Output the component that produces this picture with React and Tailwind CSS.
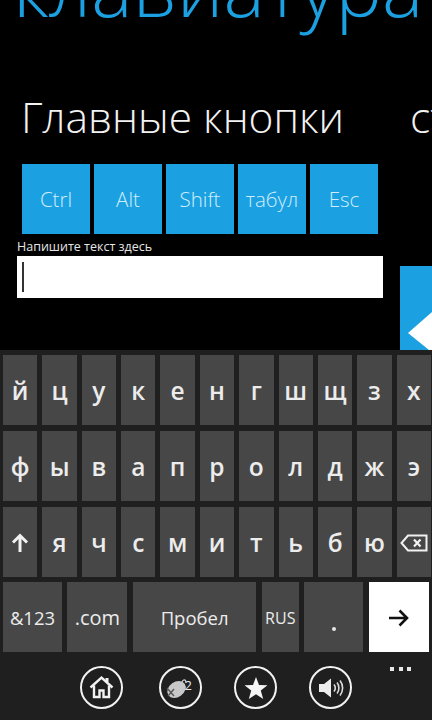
import React from "react";

const row1 = ["й", "ц", "у", "к", "е", "н", "г", "ш", "щ", "з", "х"];
const row2 = ["ф", "ы", "в", "а", "п", "р", "о", "л", "д", "ж", "э"];
const row3 = ["я", "ч", "с", "м", "и", "т", "ь", "б", "ю"];
const tiles = ["Ctrl", "Alt", "Shift", "табул", "Esc"];

function Key({ children, className = "text-[24.5px] font-semibold" }) {
  return (
    <div className={"bg-[#474747] h-[70px] flex items-center justify-center text-[#ececec] pt-[2px] " + className}>
      {children}
    </div>
  );
}

function Circle({ children }) {
  return (
    <div className="w-[43px] h-[43px] rounded-full border-[2px] border-[#f2f2f2] flex items-center justify-center">
      {children}
    </div>
  );
}

export default function App() {
  return (
    <div className="w-[432px] h-[720px] overflow-hidden bg-black flex flex-col font-['Open_Sans',sans-serif]">
      <div className="h-[350px] shrink-0 overflow-hidden">
        <h1 className="ml-[13px] mt-[-61px] h-[97px] text-[#1ba1e2] text-[78px] leading-[97px] font-light whitespace-nowrap font-['Open_Sans',sans-serif]">
          клавиатура
        </h1>
        <div className="mt-[53px] flex whitespace-nowrap text-[#f2f2f2] text-[42.5px] leading-[56px] font-light">
          <span className="ml-[21px] w-[389px] shrink-0">Главные кнопки</span>
          <span>ст</span>
        </div>
        <div className="mt-[19px] ml-[22px] flex gap-[4px]">
          {tiles.map((t) => (
            <div key={t} className="w-[68px] h-[70px] bg-[#1ba1e2] flex items-center justify-center text-[#d2edfa] text-[20.5px] font-light">
              {t}
            </div>
          ))}
        </div>
        <div className="flex">
          <div className="ml-[17px] w-[366px] shrink-0">
            <div className="text-[#e6e6e6] text-[12.5px] leading-[22px] h-[22px] pt-[2px]">Напишите текст здесь</div>
            <div className="h-[42px] bg-white flex items-center pl-[5px]">
              <div className="w-[2px] h-[30px] bg-[#333]" />
            </div>
          </div>
          <div className="ml-[17px] mt-[32px] w-[32px] h-[84px] bg-[#1ba1e2]">
            <svg width="32" height="84" viewBox="0 0 32 84">
              <path d="M8 67 L32 46 V84 H29 Z" fill="#fff" />
            </svg>
          </div>
        </div>
      </div>

      <div className="flex-1 bg-[#1f1f1f] pt-[5px] pl-[3px] pr-[1px]">
        <div className="grid grid-cols-11 gap-x-[5px] gap-y-[6px]">
          {row1.map((k) => <Key key={k}>{k}</Key>)}
          {row2.map((k) => <Key key={k}>{k}</Key>)}
          <Key>
            <svg width="18" height="20" viewBox="0 0 18 20" fill="none" stroke="#f2f2f2" strokeWidth="3">
              <path d="M9 19 V3 M2 9.5 L9 2.5 L16 9.5" />
            </svg>
          </Key>
          {row3.map((k) => <Key key={k}>{k}</Key>)}
          <Key>
            <svg width="28" height="18" viewBox="0 0 28 18" fill="none" stroke="#f2f2f2" strokeWidth="2">
              <path d="M8 1.5 H26.5 V16.5 H8 L1.5 9 Z" />
              <path d="M14 5.5 L20.5 12.5 M20.5 5.5 L14 12.5" strokeWidth="2.2" />
            </svg>
          </Key>
        </div>
        <div className="mt-[5px] grid grid-cols-[59px_60px_123.6px_37px_59px_60px] gap-x-[5.4px]">
          <Key className="text-[18.5px] font-medium">&amp;123</Key>
          <Key className="text-[20px] font-medium">.com</Key>
          <Key className="text-[18.5px] font-medium">Пробел</Key>
          <Key className="text-[16px] font-medium">RUS</Key>
          <Key className="text-[25px]">
            <div className="w-[4px] h-[4px] mt-[22px] bg-[#e6e6e6] rounded-full" />
          </Key>
          <Key className="!bg-white">
            <svg width="20" height="18" viewBox="0 0 20 18" fill="none" stroke="#111" strokeWidth="2.6">
              <path d="M0 9 H18 M10.5 1.5 L18 9 L10.5 16.5" />
            </svg>
          </Key>
        </div>
        <div className="relative mt-[14px] ml-[77px] flex">
          <Circle>
            <svg width="25" height="25" viewBox="0 0 25 25" fill="none" stroke="#f2f2f2" strokeWidth="2.4">
              <path d="M1.5 12.5 L12.5 2.5 L23.5 12.5" />
              <path d="M5 10.5 V22 H10.5 V15.5 H14.5 V22 H20 V10.5" />
              <path d="M18 3 V7" strokeWidth="3" />
            </svg>
          </Circle>
          <div className="ml-[36px]">
            <Circle>
              <svg width="29" height="25" viewBox="0 0 29 25" className="overflow-visible">
                <ellipse cx="10.5" cy="14.5" rx="10" ry="7.5" fill="#c8c8c8" transform="rotate(-35 10.5 14.5)" />
                <path d="M1 13 L8 21 M2 21 L8 14" stroke="#555" strokeWidth="1.4" />
                <path d="M16 7 C17 4 20 4 20 8" stroke="#c8c8c8" strokeWidth="1.2" fill="none" />
                <text x="18.5" y="15" fontSize="13" fill="#e6e6e6" fontFamily="Open Sans">2</text>
              </svg>
            </Circle>
          </div>
          <div className="ml-[32px]">
            <Circle>
              <svg width="24" height="24" viewBox="0 0 24 24">
                <path d="M12 1 L15 9 L23.5 9.3 L16.8 14.6 L19.2 23 L12 18.2 L4.8 23 L7.2 14.6 L0.5 9.3 L9 9 Z" fill="#f5f5f5" />
              </svg>
            </Circle>
          </div>
          <div className="ml-[32px]">
            <Circle>
              <svg width="26" height="22" viewBox="0 0 26 22" fill="none">
                <path d="M1 7 H6 L13 1.5 V20.5 L6 15 H1 Z" fill="#ededed" />
                <path d="M16 7.5 C17.5 9.5 17.5 12.5 16 14.5 M19 5.5 C21.5 8.5 21.5 13.5 19 16.5 M22 3.5 C25.5 8 25.5 14 22 18.5" stroke="#dcdcdc" strokeWidth="1.6" />
              </svg>
            </Circle>
          </div>
          <div className="absolute left-[310px] top-[1px] flex gap-[4.5px]">
            <div className="w-[4px] h-[4px] bg-[#e8e8e8]" />
            <div className="w-[4px] h-[4px] bg-[#e8e8e8]" />
            <div className="w-[4px] h-[4px] bg-[#e8e8e8]" />
          </div>
        </div>
      </div>
    </div>
  );
}
